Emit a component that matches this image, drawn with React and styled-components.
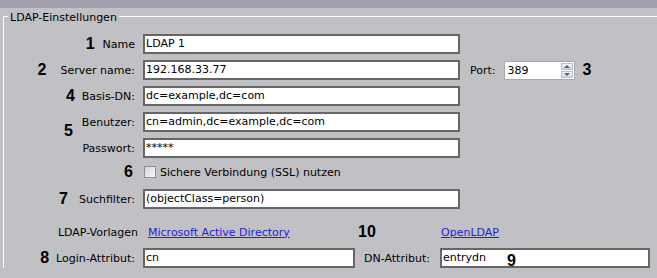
import React from "react";
import styled, { createGlobalStyle } from "styled-components";

const Global = createGlobalStyle`
  html, body {
    margin: 0;
    padding: 0;
    background: #c1c0c5;
    overflow: hidden;
  }
  body {
    font-family: "DejaVu Sans", Verdana, sans-serif;
    font-size: 11px;
    color: #000;
  }
`;

const Page = styled.div`
  width: 657px;
  height: 278px;
`;

const TopBand = styled.div`
  height: 8px;
  background: #a4a0ac;
`;

const Fieldset = styled.fieldset`
  margin: 0 0 0 3px;
  padding: 0;
  border: none;
  border-top: 1px solid #fff;
  border-left: 1px solid #fff;
  min-width: 0;
`;

const Legend = styled.legend`
  margin-left: 4px;
  padding: 3px 2px 0;
  line-height: 13px;
`;

const Form = styled.div`
  display: flex;
  flex-direction: column;
  gap: 6px;
  padding-top: 10px;
`;

const Row = styled.div`
  display: flex;
  align-items: center;
  height: ${(p) => p.$h || 20}px;
  margin-top: ${(p) => p.$mt || 0}px;
`;

const Group = styled.div`
  position: relative;
  display: flex;
  flex-direction: column;
  gap: 6px;
`;

const LabelCell = styled.div`
  width: ${(p) => p.$w || 131}px;
  flex-shrink: 0;
  display: flex;
  justify-content: flex-end;
  align-items: center;
  white-space: nowrap;
`;

const Num = styled.span`
  font-family: "Liberation Sans", Arial, sans-serif;
  font-weight: bold;
  font-size: 16px;
  line-height: 16px;
  margin-right: ${(p) => p.$gap || 0}px;
  margin-left: ${(p) => p.$ml || 0}px;
`;

const FloatNum = styled(Num)`
  position: absolute;
  left: ${(p) => p.$x}px;
  top: ${(p) => p.$y}px;
`;

const Text = styled.span`
  white-space: nowrap;
  margin-left: ${(p) => p.$ml || 0}px;
`;

const Field = styled.div`
  position: relative;
  box-sizing: border-box;
  width: ${(p) => p.$w}px;
  height: 20px;
  margin-left: ${(p) => p.$ml ?? 8}px;
  flex-shrink: 0;
  border: 2px solid #666;
  background: #fff;
  padding-left: 1px;
  line-height: 16px;
  white-space: nowrap;
  overflow: visible;
`;

const Spinner = styled.div`
  box-sizing: border-box;
  width: 71px;
  height: 19px;
  margin-left: ${(p) => p.$ml || 0}px;
  display: flex;
  align-items: center;
  justify-content: space-between;
  border: 1px solid #a9a9ad;
  background: #fff;
  padding: 0 1px 0 3px;
`;

const Arrows = styled.div`
  display: flex;
  flex-direction: column;
  gap: 1px;
`;

const ArrowBtn = styled.div`
  box-sizing: border-box;
  width: 12px;
  height: 7px;
  display: flex;
  align-items: center;
  justify-content: center;
  border: 1px solid #b8c0cc;
  background: linear-gradient(#f2f4f8, #d3d9e2);
  &::after {
    content: "";
    border-left: 3px solid transparent;
    border-right: 3px solid transparent;
    ${(p) =>
      p.$down
        ? "border-top: 3px solid #4d6082;"
        : "border-bottom: 3px solid #4d6082;"}
  }
`;

const Checkbox = styled.span`
  box-sizing: border-box;
  width: 12px;
  height: 12px;
  margin-left: ${(p) => p.$ml || 0}px;
  border: 1px solid #8e8f93;
  background: linear-gradient(135deg, #d4d4d6, #fbfbfb);
`;

const Cell = styled.div`
  width: ${(p) => p.$w}px;
  flex-shrink: 0;
  display: flex;
  align-items: center;
  margin-left: ${(p) => p.$ml || 0}px;
`;

const Link = styled.a`
  color: #2222d8;
  text-decoration: underline;
  white-space: nowrap;
  cursor: pointer;
`;

export default function App() {
  return (
    <Page>
      <Global />
      <TopBand />
      <Fieldset>
        <Legend>LDAP-Einstellungen</Legend>
        <Form>
          <Row>
            <LabelCell>
              <Num $gap={8}>1</Num>
              <Text>Name</Text>
            </LabelCell>
            <Field $w={317}>LDAP 1</Field>
          </Row>
          <Row>
            <LabelCell>
              <Num $gap={14}>2</Num>
              <Text>Server name:</Text>
            </LabelCell>
            <Field $w={317}>192.168.33.77</Field>
            <Text $ml={10}>Port:</Text>
            <Spinner $ml={8}>
              <span>389</span>
              <Arrows>
                <ArrowBtn />
                <ArrowBtn $down />
              </Arrows>
            </Spinner>
            <Num $ml={8}>3</Num>
          </Row>
          <Row>
            <LabelCell>
              <Num $gap={7}>4</Num>
              <Text>Basis-DN:</Text>
            </LabelCell>
            <Field $w={317}>dc=example,dc=com</Field>
          </Row>
          <Group>
            <FloatNum $x={60} $y={11}>5</FloatNum>
            <Row>
              <LabelCell>
                <Text>Benutzer:</Text>
              </LabelCell>
              <Field $w={317}>cn=admin,dc=example,dc=com</Field>
            </Row>
            <Row>
              <LabelCell>
                <Text>Passwort:</Text>
              </LabelCell>
              <Field $w={317}>*****</Field>
            </Row>
          </Group>
          <Row $h={16}>
            <LabelCell>
              <Num $gap={2}>6</Num>
            </LabelCell>
            <Checkbox $ml={9} />
            <Text $ml={4}>Sichere Verbindung (SSL) nutzen</Text>
          </Row>
          <Row $mt={3}>
            <LabelCell>
              <Num $gap={11}>7</Num>
              <Text>Suchfilter:</Text>
            </LabelCell>
            <Field $w={317}>(objectClass=person)</Field>
          </Row>
          <Row $mt={7}>
            <LabelCell $w={134}>
              <Text>LDAP-Vorlagen</Text>
            </LabelCell>
            <Cell $w={210} $ml={10}>
              <Link>Microsoft Active Directory</Link>
            </Cell>
            <Cell $w={83}>
              <Num>10</Num>
            </Cell>
            <Link>OpenLDAP</Link>
          </Row>
          <Row>
            <LabelCell>
              <Num $gap={7}>8</Num>
              <Text>Login-Attribut:</Text>
            </LabelCell>
            <Field $w={212}>cn</Field>
            <Text $ml={9}>DN-Attribut:</Text>
            <Field $w={210} $ml={10}>
              entrydn
              <FloatNum $x={65} $y={3}>9</FloatNum>
            </Field>
          </Row>
        </Form>
      </Fieldset>
    </Page>
  );
}
